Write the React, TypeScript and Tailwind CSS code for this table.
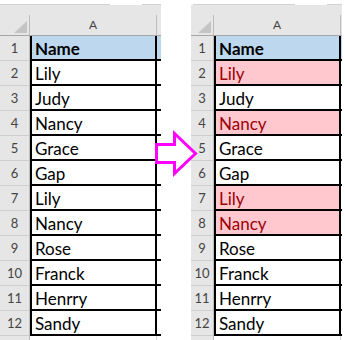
import React from 'react';

type Seg = { w: string; on: boolean };

type SheetProps = {
  rowNumW: string;
  colBW: string;
  highlight: boolean;
  topSegs: Seg[];
};

const names = ['Lily', 'Judy', 'Nancy', 'Grace', 'Gap', 'Lily', 'Nancy', 'Rose', 'Franck', 'Henrry', 'Sandy'];

// rows with duplicate values, marked on the right sheet
const dupes = ['Lily', 'Nancy'];

const Corner = () => (
  <svg width="13" height="12" viewBox="0 0 13 12">
    <polygon points="0,12 13,0 13,12" fill="#c4c4c4" />
  </svg>
);

const Sheet = ({ rowNumW, colBW, highlight, topSegs }: SheetProps) => {
  return (
    <div className="flex flex-col">
      <div className="h-[4px] bg-white" />
      <div className="flex h-[1px]">
        {topSegs.map((s, i) => (
          <div key={i} className={`${s.w} ${s.on ? 'bg-[#d2d2d2]' : 'bg-white'}`} />
        ))}
      </div>
      <div className="h-[10px] bg-[#e6e6e6]" />

      <div className="flex h-[21px] bg-[#e6e6e6] border-b border-[#a6a6a6]">
        <div className={`${rowNumW} border-r border-[#bcbcbc] flex items-end justify-end pr-[2px] pb-[2px]`}>
          <Corner />
        </div>
        <div className="w-[127px] border-r border-[#bcbcbc] flex items-center justify-center text-[12px] leading-none text-[#444]">
          A
        </div>
        <div className={colBW} />
      </div>

      {['Name', ...names].map((name, i) => {
        const first = i === 0;
        const marked = highlight && dupes.includes(name);
        const fill = first ? 'bg-[#bdd7ee] font-bold text-black' : marked ? 'bg-[#ffc7ce] text-[#9c0006]' : 'bg-white text-black';
        return (
          <div key={i} className="flex h-[25px]">
            <div className={`${rowNumW} bg-[#e6e6e6] border-r border-b border-r-[#bcbcbc] border-b-[#cfcfcf] flex items-center justify-center text-[13px] leading-none text-[#444]`}>
              {i + 1}
            </div>
            <div className={`w-[127px] border-x-2 border-b-2 border-black flex items-end pl-[3px] pb-[2px] text-[17px] leading-none ${fill}`}>
              {name}
            </div>
            <div className={`${colBW} border-b-2 border-black ${first ? 'bg-[#bdd7ee]' : 'bg-white'}`} />
          </div>
        );
      })}

      {/* next row, only its top edge is in view */}
      <div className="flex h-[25px]">
        <div className={`${rowNumW} bg-[#e6e6e6] border-r border-[#bcbcbc]`} />
        <div className="w-[127px] border-r border-[#d4d4d4] bg-white" />
        <div className={colBW} />
      </div>
    </div>
  );
};

const App = () => {
  return (
    <div className="relative w-[345px] h-[340px] overflow-hidden bg-white font-['Lato',sans-serif]">
      <div className="flex gap-[30px]">
        <Sheet
          rowNumW="w-[30px]"
          colBW="w-[4px]"
          highlight={false}
          topSegs={[
            { w: 'w-[110px]', on: true },
            { w: 'w-[32px]', on: false },
            { w: 'w-[19px]', on: true },
          ]}
        />
        <Sheet
          rowNumW="w-[23px]"
          colBW="w-[1px]"
          highlight={true}
          topSegs={[
            { w: 'w-[2px]', on: false },
            { w: 'w-[102px]', on: true },
            { w: 'w-[32px]', on: false },
            { w: 'w-[15px]', on: true },
          ]}
        />
      </div>

      {/* arrow between the two sheets */}
      <svg className="absolute left-[150px] top-[125px]" width="55" height="60" viewBox="0 0 55 60">
        <polygon
          points="6.5,19.5 24.5,19.5 24.5,8.5 45.5,28.5 24.5,48.5 24.5,37.5 6.5,37.5"
          fill="white"
          stroke="#ff00ff"
          strokeWidth="3"
          strokeLinejoin="miter"
        />
      </svg>
    </div>
  );
};

export default App;
